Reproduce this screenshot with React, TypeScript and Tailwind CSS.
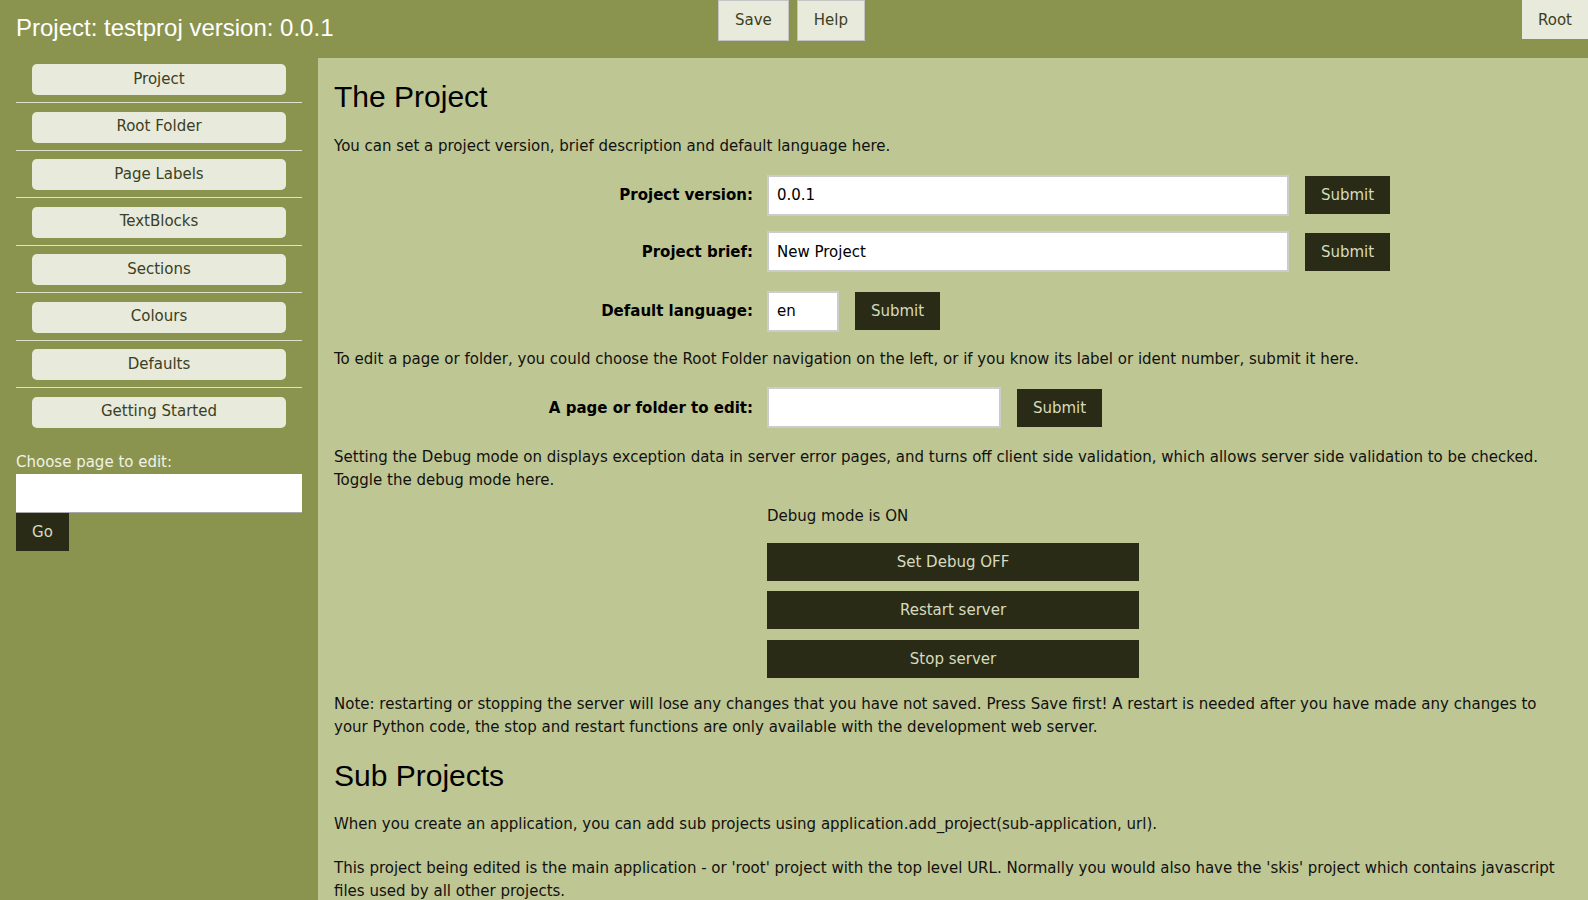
const navItems = [
    "Project",
    "Root Folder",
    "Page Labels",
    "TextBlocks",
    "Sections",
    "Colours",
    "Defaults",
    "Getting Started",
];

function FieldRow({
    label,
    value,
    inputWidth,
    className,
}: {
    label: string;
    value: string;
    inputWidth: string;
    className: string;
}) {
    return (
        <div className={`flex items-baseline ${className}`}>
            <label className="mr-[14px] w-[419px] shrink-0 text-right font-bold text-black">
                {label}
            </label>
            <input
                defaultValue={value}
                className={`h-[41px] ${inputWidth} border-2 border-[#cccccc] bg-white px-2 leading-[normal] text-black outline-none`}
            />
            <button className="ml-4 h-[38px] w-[85px] bg-[#292b17] leading-[normal] text-[#d6dbbf]">
                Submit
            </button>
        </div>
    );
}

export default function App() {
    return (
        <div className="flex h-screen flex-col overflow-hidden font-['DejaVu_Sans',sans-serif] text-[15px] leading-[23px] text-[#111111]">

            {/* Header */}
            <header className="flex h-[58px] shrink-0 items-start bg-[#8a944f]">
                <div className="w-[718px] shrink-0 pl-4 pt-[14px] font-['Liberation_Sans',Arial,sans-serif] text-[24px] leading-[normal] text-white">
                    Project: testproj version: 0.0.1
                </div>
                <div className="flex gap-2">
                    <button className="h-[41px] border border-[#c4c4c4] bg-[#e8eadb] px-4 pb-[2px] leading-[normal] text-[#3b4024]">
                        Save
                    </button>
                    <button className="h-[41px] border border-[#c4c4c4] bg-[#e8eadb] px-4 pb-[2px] leading-[normal] text-[#3b4024]">
                        Help
                    </button>
                </div>
                <button className="ml-auto h-[39px] w-[66px] bg-[#e8eadb] leading-[normal] text-[#3b4024]">
                    Root
                </button>
            </header>

            <div className="flex min-h-0 flex-1">

                {/* Sidebar */}
                <aside className="w-[318px] shrink-0 bg-[#8a944f] px-4 pt-[6px]">
                    <ul>
                        {navItems.map((item, index) => (
                            <li
                                key={item}
                                className={
                                    index < navItems.length - 1
                                        ? "mb-[8.5px] border-b border-[#dfe2c9] pb-[7px]"
                                        : ""
                                }
                            >
                                <button className="mx-4 block h-[31px] w-[254px] rounded-[5px] bg-[#e8eadb] pb-[2px] leading-[normal] text-[#3b4024]">
                                    {item}
                                </button>
                            </li>
                        ))}
                    </ul>

                    <p className="mt-[23px] text-[#f1f2e6]">Choose page to edit:</p>
                    <input className="block h-[39.5px] w-full border-b border-[#a9a9a9] bg-white px-2 outline-none" />
                    <button className="block h-[38px] w-[53px] bg-[#292b17] leading-[normal] text-[#d6dbbf]">
                        Go
                    </button>
                </aside>

                {/* Main */}
                <main className="flex-1 bg-[#bec693] px-4 pt-[22px]">

                    <h2 className="font-['Liberation_Sans',Arial,sans-serif] text-[30px] leading-[34px] text-black">
                        The Project
                    </h2>

                    <p className="mt-[21.4px]">
                        You can set a project version, brief description and default language here.
                    </p>

                    <FieldRow label="Project version:" value="0.0.1" inputWidth="w-[522px]" className="mt-[16.6px]" />
                    <FieldRow label="Project brief:" value="New Project" inputWidth="w-[522px]" className="mt-[15.4px]" />
                    <FieldRow label="Default language:" value="en" inputWidth="w-[72px]" className="mt-[18.4px]" />

                    <p className="mt-[16.3px]">
                        To edit a page or folder, you could choose the Root Folder navigation on the left, or if you know its label or ident number, submit it here.
                    </p>

                    <FieldRow label="A page or folder to edit:" value="" inputWidth="w-[234px]" className="mt-[16.3px]" />

                    <p className="mt-[17.2px]">
                        Setting the Debug mode on displays exception data in server error pages, and turns off client side validation, which allows server side validation to be checked. Toggle the debug mode here.
                    </p>

                    <div className="ml-[433px] mt-[13.5px]">
                        <p>Debug mode is ON</p>
                        <button className="mt-[14.6px] block h-[38px] w-[372px] bg-[#292b17] leading-[normal] text-[#d6dbbf]">
                            Set Debug OFF
                        </button>
                        <button className="mt-[10.5px] block h-[38px] w-[372px] bg-[#292b17] leading-[normal] text-[#d6dbbf]">
                            Restart server
                        </button>
                        <button className="mt-[10.5px] block h-[38px] w-[372px] bg-[#292b17] leading-[normal] text-[#d6dbbf]">
                            Stop server
                        </button>
                    </div>

                    <p className="mt-[15px]">
                        Note: restarting or stopping the server will lose any changes that you have not saved. Press Save first! A restart is needed after you have made any changes to your Python code, the stop and restart functions are only available with the development web server.
                    </p>

                    <h2 className="mt-[20.3px] font-['Liberation_Sans',Arial,sans-serif] text-[30px] leading-[34px] text-black">
                        Sub Projects
                    </h2>

                    <p className="mt-[20.4px]">
                        When you create an application, you can add sub projects using application.add_project(sub-application, url).
                    </p>

                    <p className="mt-[20.3px]">
                        This project being edited is the main application - or 'root' project with the top level URL. Normally you would also have the 'skis' project which contains javascript files used by all other projects.
                    </p>

                </main>
            </div>
        </div>
    );
}
